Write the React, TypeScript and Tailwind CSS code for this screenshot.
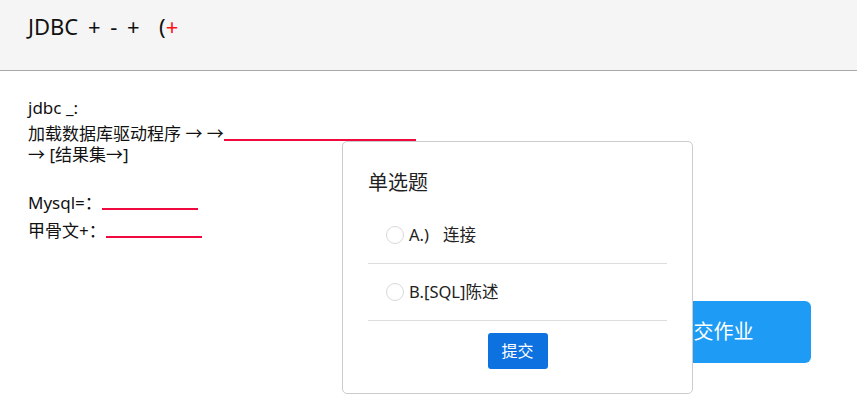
const font = { fontFamily: '"Noto Sans", "Noto Sans CJK SC", sans-serif' };

function Blank({ w }: { w: string }) {
  return <span className={`inline-block h-[2px] bg-[#f0093f] align-[-1px] ${w}`} />;
}

function Option({ children }: { children: React.ReactNode }) {
  return (
    <label className="flex h-[56px] items-center pl-[18px] text-[16.5px] text-[#222]">
      <span className="mr-[5px] inline-block h-[18px] w-[18px] rounded-full border border-[#d9d9d9] bg-white" />
      <span className="whitespace-pre">{children}</span>
    </label>
  );
}

export default function App() {
  return (
    <div className="relative h-[394px] w-[857px] overflow-hidden bg-white text-[#111]" style={font}>
      <header className="h-[71px] border-b border-[#a8a8a8] bg-[#f5f5f5] pl-[28px] pt-[11px]">
        <h1 className="whitespace-pre text-[22px] leading-[30px] [word-spacing:4px]">
          JDBC + - +  (<span className="text-[#ff1111]">+</span>
        </h1>
      </header>

      <main className="pl-[28px] pt-[26px] text-[17px] leading-[21px]">
        <p className="mb-[5px]">jdbc _:</p>
        <p>
          加载数据库驱动程序 → →<Blank w="w-[192px]" />
        </p>
        <p>→ [结果集→]</p>
        <div className="h-[27px]" />
        <p className="mb-[7px]">
          Mysql=：<Blank w="w-[96px]" />
        </p>
        <p>
          甲骨文+：<Blank w="w-[96px]" />
        </p>
      </main>

      <button className="absolute left-[616px] top-[301px] h-[62px] w-[195px] rounded-[6px] bg-[#1e9bf5] text-[20px] text-white">
        提交作业
      </button>

      <section className="absolute left-[342px] top-[141px] h-[253px] w-[351px] rounded-[5px] border border-[#cccccc] bg-white px-[25px]">
        <h2 className="pt-[27px] text-[20px] leading-[28px] text-[#222]">单选题</h2>
        <div className="mt-[10px]">
          <Option>
            A.)<span className="ml-[14px]">连接</span>
          </Option>
          <div className="border-t border-[#dddddd]" />
          <Option>B.[SQL]陈述</Option>
          <div className="border-t border-[#dddddd]" />
        </div>
        <div className="mt-[12px] flex justify-center">
          <button className="h-[36px] w-[60px] rounded-[3px] bg-[#0d72df] text-[16px] text-white">提交</button>
        </div>
      </section>
    </div>
  );
}
